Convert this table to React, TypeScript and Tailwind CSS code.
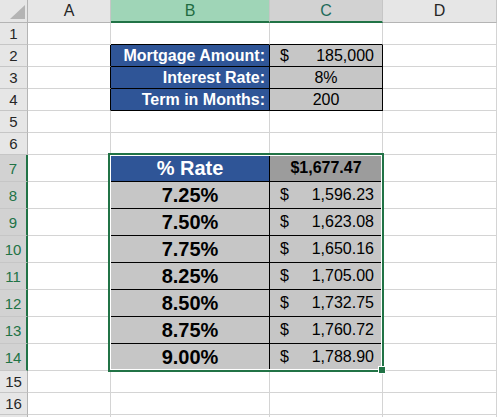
import React from "react";

const rates = [
  { rate: "7.25%", pay: "1,596.23" },
  { rate: "7.50%", pay: "1,623.08" },
  { rate: "7.75%", pay: "1,650.16" },
  { rate: "8.25%", pay: "1,705.00" },
  { rate: "8.50%", pay: "1,732.75" },
  { rate: "8.75%", pay: "1,760.72" },
  { rate: "9.00%", pay: "1,788.90" },
];

function Accounting({ value }: { value: string }) {
  return (
    <div className="flex h-full w-full items-center justify-between pl-[10px] pr-[8px] text-[16px] text-black">
      <span>$</span>
      <span>{value}</span>
    </div>
  );
}

export default function App() {
  const rows = Array.from({ length: 17 }, (_, i) => i + 1);
  const isBig = (r: number) => r >= 7 && r <= 14;

  // row 17 is only a sliver at the bottom edge, no number shows
  const rowHeader = (r: number) => (
    <div
      key={`h${r}`}
      className={
        isBig(r)
          ? "flex items-center justify-center border-r-2 border-b border-r-[#217346] border-b-[#c6c6c6] bg-[#d2d2d2] text-[15px] text-[#217346]"
          : "flex items-center justify-center border-r border-b border-r-[#b4b4b4] border-b-[#c6c6c6] bg-[#e6e6e6] text-[15px] text-[#262626]"
      }
    >
      {r < 17 ? r : null}
    </div>
  );

  const label = "flex items-center justify-end pr-[4px] bg-[#2f5597] text-white font-bold text-[16px] border-r border-b border-black";
  const input = "flex items-center bg-[#c6c6c6] text-[16px] text-black border-r border-b border-black";
  const grid = "border-r border-b border-[#d4d4d4]";

  const renderRow = (r: number) => {
    const cells: React.ReactNode[] = [rowHeader(r)];
    cells.push(
      <div
        key={`a${r}`}
        className={
          r >= 2 && r <= 4
            ? "border-r border-b border-r-black border-b-[#d4d4d4]"
            : grid
        }
      />
    );
    if (r === 1) {
      cells.push(<div key="b1" className="border-r border-b border-r-[#d4d4d4] border-b-black" />);
      cells.push(<div key="c1" className="border-r border-b border-r-[#d4d4d4] border-b-black" />);
    } else if (r === 2) {
      cells.push(<div key="b2" className={label}>Mortgage Amount:</div>);
      cells.push(
        <div key="c2" className={input}>
          <Accounting value="185,000" />
        </div>
      );
    } else if (r === 3) {
      cells.push(<div key="b3" className={label}>Interest Rate:</div>);
      cells.push(<div key="c3" className={`${input} justify-center`}>8%</div>);
    } else if (r === 4) {
      cells.push(<div key="b4" className={label}>Term in Months:</div>);
      cells.push(<div key="c4" className={`${input} justify-center`}>200</div>);
    } else if (r === 7) {
      cells.push(
        <div key="b7" className="flex items-center justify-center bg-[#2f5597] text-white font-bold text-[20px] border-r border-b border-black">
          % Rate
        </div>
      );
      cells.push(
        <div key="c7" className="flex items-center justify-center bg-[#9c9c9c] text-black font-bold text-[16px] border-r border-b border-black">
          $1,677.47
        </div>
      );
    } else if (r >= 8 && r <= 14) {
      const d = rates[r - 8];
      cells.push(
        <div key={`b${r}`} className="flex items-center justify-center bg-[#c6c6c6] text-black font-bold text-[20px] border-r border-b border-black">
          {d.rate}
        </div>
      );
      cells.push(
        <div key={`c${r}`} className="bg-[#c6c6c6] border-r border-b border-black">
          <Accounting value={d.pay} />
        </div>
      );
    } else {
      cells.push(<div key={`b${r}`} className={grid} />);
      cells.push(<div key={`c${r}`} className={grid} />);
    }
    cells.push(<div key={`d${r}`} className={grid} />);
    return cells;
  };

  return (
    <div className="relative h-[417px] w-[497px] overflow-hidden bg-white font-['Liberation_Sans',Arial,sans-serif] leading-none">
      <div className="grid grid-cols-[28px_83px_159px_113px_114px] grid-rows-[23px_repeat(6,22px)_repeat(8,27px)_22px_22px_22px]">
        {/* column headers */}
        <div className="relative border-r border-b border-r-[#b4b4b4] border-b-[#b4b4b4] bg-[#e6e6e6]">
          <svg className="absolute left-[10px] top-[5px]" width="15" height="14" viewBox="0 0 15 14">
            <polygon points="15,0 15,14 0,14" fill="#b4b4b4" />
          </svg>
        </div>
        <div className="flex items-center justify-center border-r border-b border-r-[#c6c6c6] border-b-[#b4b4b4] bg-[#e6e6e6] text-[16px] text-[#262626]">
          A
        </div>
        <div className="flex items-center justify-center border-r border-b-2 border-r-[#c6c6c6] border-b-[#217346] bg-[#9fd5b7] text-[16px] text-[#1e6b41]">
          B
        </div>
        <div className="flex items-center justify-center border-r border-b-2 border-r-[#c6c6c6] border-b-[#217346] bg-[#d2d2d2] text-[16px] text-[#1e6b5a]">
          C
        </div>
        <div className="flex items-center justify-center border-r border-b border-r-[#c6c6c6] border-b-[#b4b4b4] bg-[#e6e6e6] text-[16px] text-[#262626]">
          D
        </div>
        {rows.map((r) => renderRow(r))}
      </div>

      {/* selection B7:C14 */}
      <div className="pointer-events-none absolute left-[108px] top-[153px] h-[219px] w-[276px] border-2 border-[#217346]">
        <div className="h-full w-full border border-white" />
      </div>
      <div className="absolute left-[378px] top-[366px] h-[8px] w-[8px] border border-white bg-[#217346]" />
    </div>
  );
}
